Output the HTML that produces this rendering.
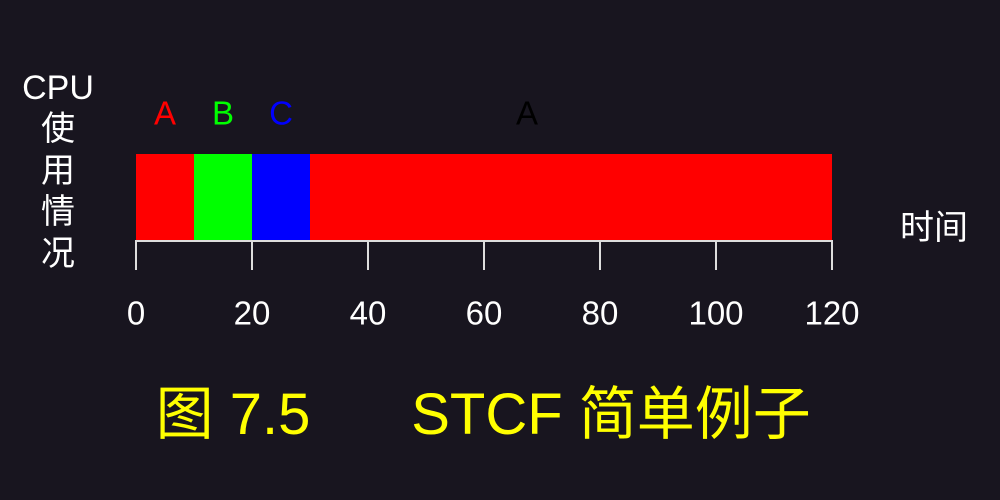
<!DOCTYPE html>
<html><head><meta charset="utf-8"><style>
body{margin:0;width:1000px;height:500px;background:#18151f;overflow:hidden;position:relative;font-family:"Liberation Sans","Noto Sans CJK SC",sans-serif}
.t{position:absolute;white-space:nowrap;line-height:1;transform:translate(-50%,-50%)}
.w{color:#fff;font-size:33px}
.c{color:#fff;font-size:34px}
.bar{position:absolute;top:154px;height:87px}
.tick{position:absolute;top:240px;width:2px;height:30px;background:#ddd}
</style></head><body>
<div class="t c" style="left:58px;top:88px">CPU</div>
<div class="t c" style="left:58px;top:129px">使</div>
<div class="t c" style="left:58px;top:171px">用</div>
<div class="t c" style="left:58px;top:212px">情</div>
<div class="t c" style="left:58px;top:254px">况</div>
<div class="t" style="left:165px;top:113px;font-size:33px;color:#f00">A</div>
<div class="t" style="left:223px;top:113px;font-size:33px;color:#0f0">B</div>
<div class="t" style="left:281px;top:113px;font-size:33px;color:#00f">C</div>
<div class="t" style="left:527px;top:113px;font-size:33px;color:#000">A</div>
<div class="bar" style="left:136px;width:58px;background:#f00"></div>
<div class="bar" style="left:194px;width:58px;background:#0f0"></div>
<div class="bar" style="left:252px;width:58px;background:#00f"></div>
<div class="bar" style="left:310px;width:522px;background:#f00"></div>
<div style="position:absolute;left:135px;top:240px;width:698px;height:2px;background:#ddd"></div>
<div class="tick" style="left:135px"></div><div class="tick" style="left:251px"></div><div class="tick" style="left:367px"></div><div class="tick" style="left:483px"></div><div class="tick" style="left:599px"></div><div class="tick" style="left:715px"></div><div class="tick" style="left:831px"></div>
<div class="t w" style="left:136px;top:313px">0</div>
<div class="t w" style="left:252px;top:313px">20</div>
<div class="t w" style="left:368px;top:313px">40</div>
<div class="t w" style="left:484px;top:313px">60</div>
<div class="t w" style="left:600px;top:313px">80</div>
<div class="t w" style="left:716px;top:313px">100</div>
<div class="t w" style="left:832px;top:313px">120</div>
<div class="t c" style="left:934px;top:228px">时间</div>
<div class="t" style="left:233px;top:415px;font-size:58px;color:#ff0">图 7.5</div>
<div class="t" style="left:611px;top:415px;font-size:58px;color:#ff0">STCF 简单例子</div>
</body></html>
